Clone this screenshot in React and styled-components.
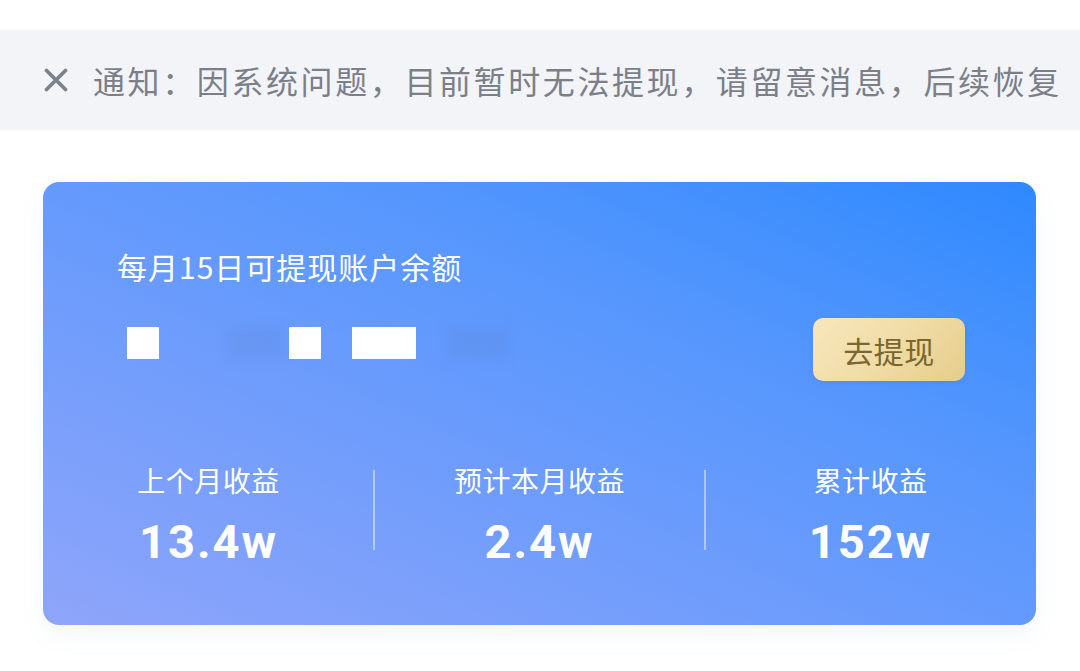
import React from 'react';
import styled, {createGlobalStyle} from 'styled-components';

const GlobalStyle = createGlobalStyle`
  html, body {
    margin: 0;
    padding: 0;
    background: #ffffff;
    font-family: "Noto Sans CJK SC", "Noto Sans", sans-serif;
  }
`

const Page = styled.div`
  width: 1080px;
  height: 671px;
  overflow: hidden;
  padding-top: 30px;
  box-sizing: border-box;
`

const Notice = styled.div`
  height: 100px;
  background: #f3f4f8;
  display: flex;
  align-items: center;
  padding-left: 44px;
  gap: 25px;
  overflow: hidden;
  svg {
    flex-shrink: 0;
  }
`

const NoticeText = styled.div`
  font-size: 32px;
  letter-spacing: 2.6px;
  color: #7b7f88;
  white-space: nowrap;
`

const Card = styled.div`
  margin: 52px 44px 0 43px;
  height: 443px;
  border-radius: 16px;
  background: linear-gradient(to top right, #8fa5fa 0%, #6d9cfc 40%, #5797fd 65%, #2e89fe 100%);
  box-shadow: 0 10px 24px rgba(120, 140, 180, 0.08);
  padding: 64px 71px 0 74px;
  box-sizing: border-box;
  color: #ffffff;
`

const CardTitle = styled.div`
  font-size: 30px;
  line-height: 40px;
  letter-spacing: 1px;
`

const BalanceRow = styled.div`
  margin-top: 32px;
  height: 63px;
  display: flex;
  align-items: center;
  justify-content: space-between;
`

const Masked = styled.div`
  display: flex;
  align-items: flex-start;
  height: 63px;
  padding-top: 9px;
  box-sizing: border-box;
`

const Block = styled.div`
  width: ${p => p.w}px;
  height: 32px;
  margin-left: ${p => p.ml}px;
  background: ${p => p.faint ? 'rgba(90, 130, 210, 0.2)' : '#ffffff'};
  filter: ${p => p.faint ? 'blur(6px)' : 'none'};
`

const WithdrawButton = styled.button`
  width: 152px;
  height: 63px;
  border: none;
  border-radius: 10px;
  background: linear-gradient(135deg, #f8e7bd 0%, #f0dca6 50%, #e6cc8a 100%);
  box-shadow: 0 2px 4px rgba(60, 90, 160, 0.15);
  color: #7a6630;
  font-family: "Noto Sans CJK SC", sans-serif;
  font-size: 30px;
  letter-spacing: 0.5px;
  padding: 0;
  cursor: pointer;
`

const Stats = styled.div`
  display: grid;
  grid-template-columns: 1fr 1fr 1fr;
  margin: 79px -71px 0 -74px;
`

const Stat = styled.div`
  position: relative;
  display: flex;
  flex-direction: column;
  align-items: center;
  &:not(:first-child)::before {
    content: '';
    position: absolute;
    left: -1px;
    top: 10px;
    width: 2px;
    height: 80px;
    background: rgba(255, 255, 255, 0.45);
  }
`

const StatLabel = styled.div`
  font-size: 28px;
  line-height: 40px;
  letter-spacing: 0.5px;
`

const StatValue = styled.div`
  margin-top: 14px;
  font-family: "Roboto", "Liberation Sans", sans-serif;
  font-weight: 700;
  font-size: 47px;
  line-height: 56px;
  letter-spacing: 2px;
`

const CloseIcon = () => (
  <svg width="24" height="24" viewBox="0 0 24 24">
    <path d="M2.5 2.5 L21.5 21.5 M21.5 2.5 L2.5 21.5" stroke="#7e828b" strokeWidth="3.8" strokeLinecap="round"/>
  </svg>
)

const stats = [
  {label: '上个月收益', value: '13.4w'},
  {label: '预计本月收益', value: '2.4w'},
  {label: '累计收益', value: '152w'},
]

const App = () => {
  return (
    <Page>
      <GlobalStyle/>
      <Notice>
        <CloseIcon/>
        <NoticeText>通知：因系统问题，目前暂时无法提现，请留意消息，后续恢复</NoticeText>
      </Notice>
      <Card>
        <CardTitle>每月15日可提现账户余额</CardTitle>
        <BalanceRow>
          <Masked>
            <Block w={32} ml={10}/>
            <Block w={58} ml={68} faint/>
            <Block w={32} ml={4}/>
            <Block w={64} ml={31}/>
            <Block w={62} ml={31} faint/>
          </Masked>
          <WithdrawButton>去提现</WithdrawButton>
        </BalanceRow>
        <Stats>
          {stats.map(s => (
            <Stat key={s.label}>
              <StatLabel>{s.label}</StatLabel>
              <StatValue>{s.value}</StatValue>
            </Stat>
          ))}
        </Stats>
      </Card>
    </Page>
  );
};

export default App;
